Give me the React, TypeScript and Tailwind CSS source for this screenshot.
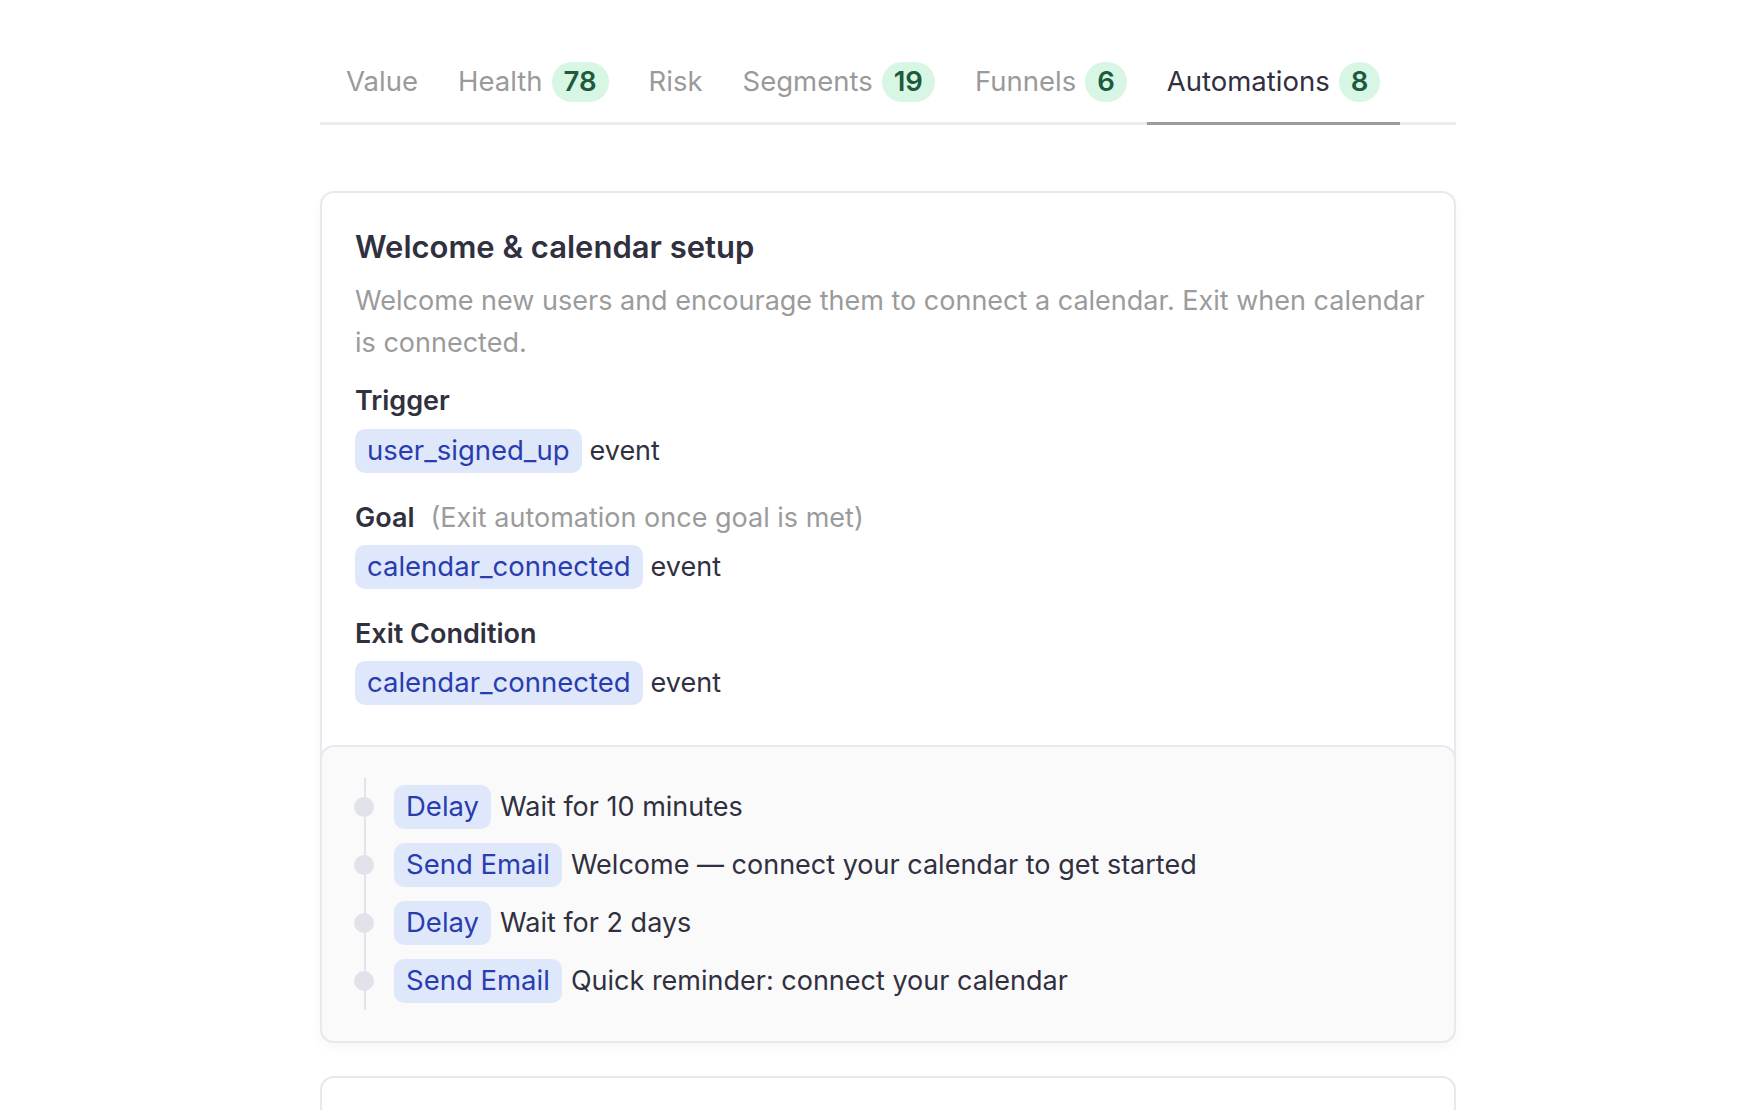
import React from "react";

const tabs = [
  { label: "Value" },
  { label: "Health", badge: "78" },
  { label: "Risk" },
  { label: "Segments", badge: "19" },
  { label: "Funnels", badge: "6" },
  { label: "Automations", badge: "8", active: true },
];

const Pill = ({ children }: { children: React.ReactNode }) => (
  <span className="inline-flex h-[44px] items-center rounded-[10px] bg-[#dfe8fb] px-[12px] text-[27.5px] text-[#2a3db0]">
    {children}
  </span>
);

const steps = [
  { kind: "Delay", text: "Wait for 10 minutes" },
  { kind: "Send Email", text: "Welcome — connect your calendar to get started" },
  { kind: "Delay", text: "Wait for 2 days" },
  { kind: "Send Email", text: "Quick reminder: connect your calendar" },
];

export default function App() {
  return (
    <div
      className="min-h-[1110px] bg-white text-[27px] text-[#30303f]"
      style={{ fontFamily: "Inter, 'Noto Sans', sans-serif" }}
    >
      <div className="ml-[320px] w-[1136px] pt-[40px]">
        {/* Tabs */}
        <div className="flex border-b-[3px] border-[#ececf0] pl-[6px] text-[27.5px]">
          {tabs.map((t) => (
            <div
              key={t.label}
              className={
                "-mb-[3px] flex h-[85px] items-center gap-[9px] border-b-[3px] px-[20px] pt-[2px] " +
                (t.active ? "border-[#9c9c9c] text-[#30303f]" : "border-transparent text-[#9a9a9a]")
              }
            >
              <span>{t.label}</span>
              {t.badge && (
                <span className="flex h-[40px] min-w-[40px] items-center justify-center rounded-full bg-[#d7f6e3] px-[12px] font-semibold text-[#1d5a3e]">
                  {t.badge}
                </span>
              )}
            </div>
          ))}
        </div>

        {/* Card 1 */}
        <div className="mt-[66px] rounded-[14px] border-2 border-[#e8e8ef] shadow-[0_4px_12px_rgba(0,0,0,0.04)]">
          <div className="pl-[33px] pr-[20px] pt-[34px] pb-[40px]">
            <div className="text-[31px] font-semibold leading-[40px] text-[#30303f]">Welcome &amp; calendar setup</div>
            <p className="mt-[13px] leading-[41.5px] text-[#9b9b9b]">
              Welcome new users and encourage them to connect a calendar. Exit when calendar is connected.
            </p>

            <div className="mt-[22px] font-semibold leading-[32px]">Trigger</div>
            <div className="mt-[12px] flex items-center gap-[8px]">
              <Pill>user_signed_up</Pill>
              <span>event</span>
            </div>

            <div className="mt-[29px] flex items-center gap-[16px] leading-[32px]">
              <span className="font-semibold">Goal</span>
              <span className="text-[#9b9b9b]">(Exit automation once goal is met)</span>
            </div>
            <div className="mt-[11px] flex items-center gap-[8px]">
              <Pill>calendar_connected</Pill>
              <span>event</span>
            </div>

            <div className="mt-[29px] font-semibold leading-[32px]">Exit Condition</div>
            <div className="mt-[11px] flex items-center gap-[8px]">
              <Pill>calendar_connected</Pill>
              <span>event</span>
            </div>
          </div>

          <div className="-mx-[2px] -mb-[2px] rounded-[14px] border-2 border-[#e8e8ef] bg-[#fafafa] px-[32px] pt-[31px] pb-[31px]">
            <div className="relative flex flex-col gap-[14px] py-[7px] pl-[40px]">
              <div className="absolute left-[10px] top-0 bottom-0 w-[2px] bg-[#e3e3ea]" />
              {steps.map((s, i) => (
                <div key={i} className="relative flex items-center gap-[9px]">
                  <div className="absolute -left-[40px] top-1/2 h-[20px] w-[20px] -translate-y-1/2 rounded-full bg-[#e2e2ea]" />
                  <Pill>{s.kind}</Pill>
                  <span>{s.text}</span>
                </div>
              ))}
            </div>
          </div>
        </div>

        {/* Card 2 (partially visible) */}
        <div className="mt-[33px] h-[200px] rounded-[14px] border-2 border-[#e8e8ef]" />
      </div>
    </div>
  );
}
